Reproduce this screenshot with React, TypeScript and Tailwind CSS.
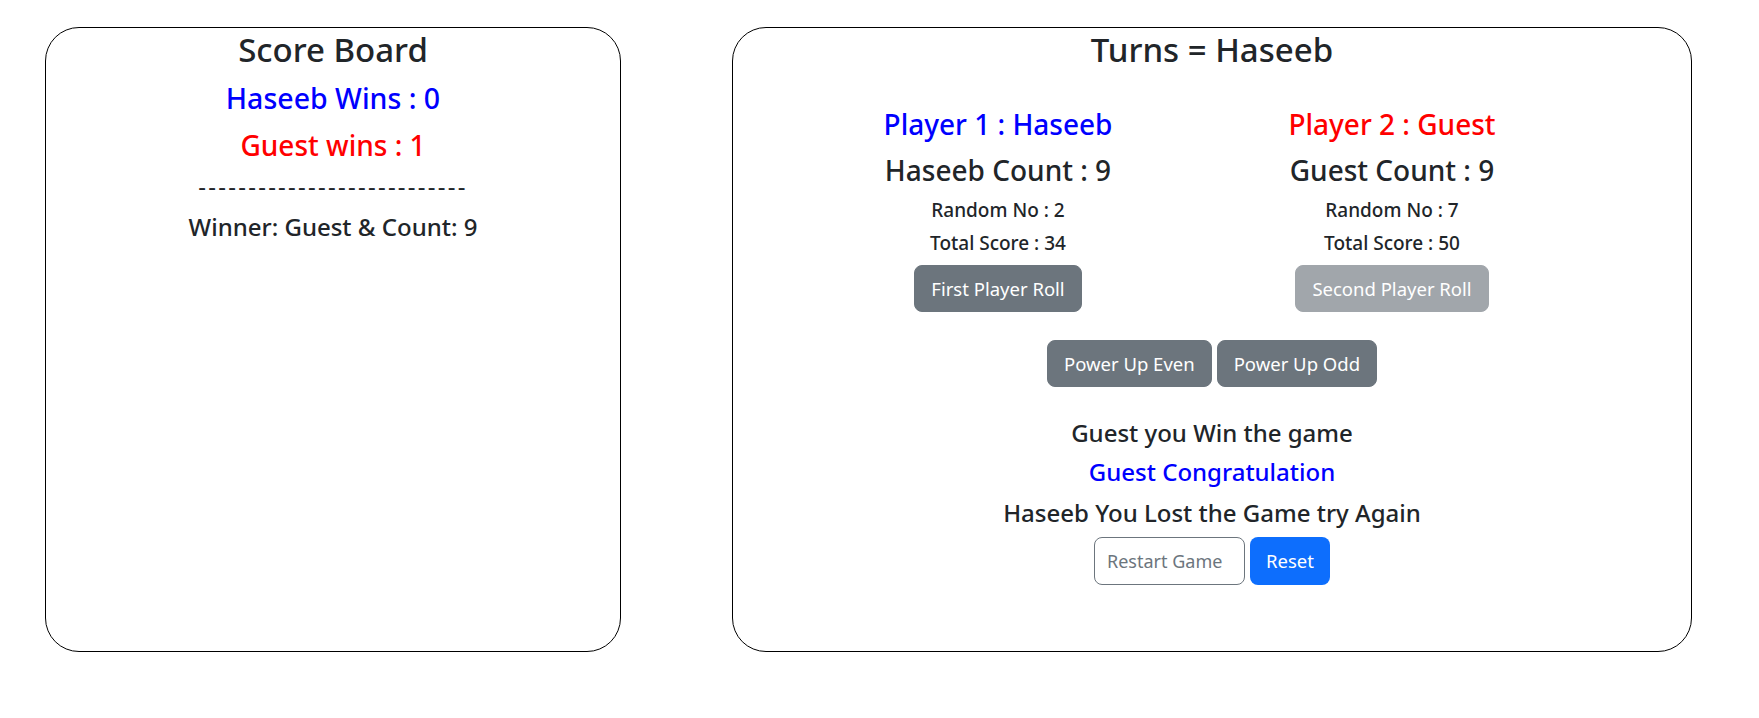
import React from "react";

export default function App() {
  return (
    <div className="min-h-[718px] bg-white pt-[27px] pl-[45px] flex gap-[111px] items-start text-[#212529] font-['Noto_Sans','Segoe_UI',sans-serif]">
      {/* score board */}
      <div className="w-[576px] h-[625px] border border-black rounded-[34px] text-center font-medium">
        <h2 className="h-[43px] leading-[43px] text-[33px]">Score Board</h2>
        <h3 className="h-[55px] leading-[55px] text-[28.5px] text-[#0000ff]">Haseeb Wins : 0</h3>
        <h3 className="h-[38px] leading-[38px] text-[28px] text-[#ff0000]">Guest wins : 1</h3>
        <div className="h-[44px] leading-[44px] text-[24px] font-normal tracking-[2.25px]">
          ---------------------------
        </div>
        <h4 className="h-[38px] leading-[38px] text-[24px]">Winner: Guest &amp; Count: 9</h4>
      </div>

      {/* game */}
      <div className="w-[960px] h-[625px] border border-black rounded-[34px] text-center">
        <h2 className="h-[44px] leading-[44px] text-[33px] font-medium">Turns = Haseeb</h2>
        <div className="mt-[28px] pl-[68px] flex">
          <PlayerCol
            name="Player 1 : Haseeb"
            color="text-[#0000ff]"
            count="Haseeb Count : 9"
            random="Random No : 2"
            total="Total Score : 34"
            label="First Player Roll"
          />
          <PlayerCol
            name="Player 2 : Guest"
            color="text-[#ff0000]"
            count="Guest Count : 9"
            random="Random No : 7"
            total="Total Score : 50"
            label="Second Player Roll"
            disabled
          />
        </div>
        <div className="mt-[28px] flex justify-center gap-[5px]">
          <button className="h-[47px] px-4 rounded-lg border border-[#6c757d] bg-[#6c757d] text-white text-[18.5px]">
            Power Up Even
          </button>
          <button className="h-[47px] px-4 rounded-lg border border-[#6c757d] bg-[#6c757d] text-white text-[18.5px]">
            Power Up Odd
          </button>
        </div>
        <h4 className="mt-[24px] h-[44px] leading-[44px] text-[24px] font-medium">Guest you Win the game</h4>
        <h4 className="h-[34px] leading-[34px] text-[24px] font-medium text-[#0000ff]">Guest Congratulation</h4>
        <h4 className="h-[48px] leading-[48px] text-[24px] font-medium">Haseeb You Lost the Game try Again</h4>
        <div className="flex justify-center gap-[5px]">
          <input
            placeholder="Restart Game"
            className="w-[151px] h-[48px] px-3 border border-[#6c757d] rounded-lg text-[18px] placeholder:text-[#6c757d] outline-none"
          />
          <button className="w-[80px] h-[48px] rounded-lg bg-[#0d6efd] text-white text-[18.5px]">Reset</button>
        </div>
      </div>
    </div>
  );
}

function PlayerCol(props: {
  name: string;
  color: string;
  count: string;
  random: string;
  total: string;
  label: string;
  disabled?: boolean;
}) {
  return (
    <div className="w-[394px] flex flex-col items-center font-medium">
      <h3 className={`h-[49px] leading-[49px] text-[28px] ${props.color}`}>{props.name}</h3>
      <h3 className="h-[43px] leading-[43px] text-[28px]">{props.count}</h3>
      <h5 className="h-[36px] leading-[36px] text-[19px]">{props.random}</h5>
      <h5 className="h-[31px] leading-[31px] text-[19px]">{props.total}</h5>
      <button
        disabled={props.disabled}
        className={`mt-[6px] h-[47px] px-4 rounded-lg border text-white text-[18.5px] font-normal ${
          props.disabled ? "bg-[#a1a6ab] border-[#a1a6ab]" : "bg-[#6c757d] border-[#6c757d]"
        }`}
      >
        {props.label}
      </button>
    </div>
  );
}
